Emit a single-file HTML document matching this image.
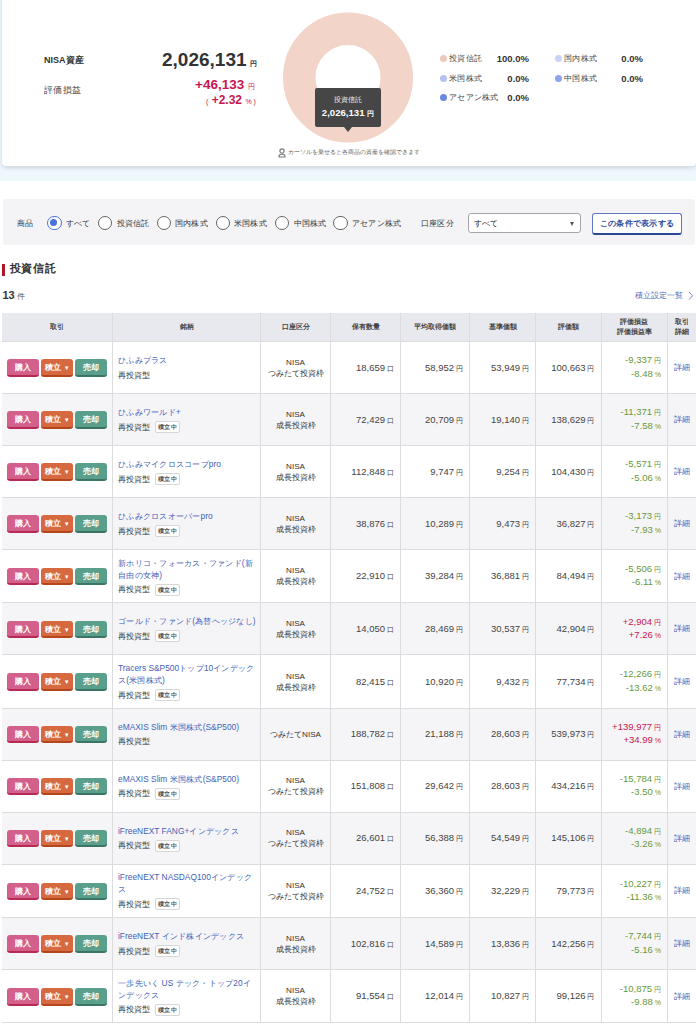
<!DOCTYPE html>
<html><head><meta charset="utf-8">
<style>
*{box-sizing:border-box;margin:0;padding:0}
html,body{width:696px;height:1024px;overflow:hidden;background:#fff;font-family:"Liberation Sans",sans-serif;color:#333}
.abs{position:absolute;white-space:nowrap}
#band{position:absolute;left:0;top:0;width:696px;height:180.5px;background:#eff8fd}
#card{position:absolute;left:2px;top:-10px;width:694px;height:176px;background:#fff;border-radius:4px;box-shadow:0 1.5px 4px rgba(70,80,90,.2)}
.lbl{font-size:9.5px}
.yen{font-size:7px}
.leg{font-size:8.3px;color:#444;letter-spacing:.25px}
.legv{font-size:9.5px;font-weight:bold;color:#333}
.dot{position:absolute;width:7px;height:7px;border-radius:50%}
#filter{position:absolute;left:3px;top:199px;width:692px;height:46.3px;background:#f4f4f7;border-radius:3px}
.fl{font-size:8.3px;color:#333;letter-spacing:.2px}
.radio{position:absolute;width:14.4px;height:14.4px;border-radius:50%;border:1.6px solid #666;background:#fff}
.radio.on{border-color:#4a72dc}
.radio.on:after{content:"";position:absolute;left:2.1px;top:2.1px;width:7px;height:7px;border-radius:50%;background:#4a72dc}
table{position:absolute;left:2px;top:313px;width:694px;border-collapse:separate;border-spacing:0;table-layout:fixed}
td,th{border-right:1px solid #dcdcdf;border-bottom:1px solid #dcdcdf;font-size:9.5px;overflow:hidden;white-space:nowrap;padding:0}
th{background:#e8e9ee;height:29px;font-size:7px;font-weight:bold;color:#444;text-align:center;line-height:9.7px}
td{vertical-align:middle}
tr.s td{background:#f5f5f8}
td.num{text-align:right;padding-right:6.5px;color:#444}
td.num small{font-size:7px;margin-left:1.5px}
.btn{display:inline-block;width:32px;height:17.6px;border-radius:3px;color:#fff;font-size:8.4px;font-weight:bold;text-align:center;line-height:17.2px;vertical-align:top;margin-right:2.2px;position:relative;top:0.5px}
.b1{background:#d3608a;border-bottom:2px solid #b82a55}
.b2{background:#d6693f;border-bottom:2px solid #b4461c}
.b3{background:#5a9f8b;border-bottom:2px solid #3b7565;margin-right:0}
td.bt{padding-left:5px}
td.nm{padding-left:5px;padding-top:0.5px;font-size:8.2px;line-height:12px}
td.nm a{color:#3f62b8;text-decoration:none;display:block;font-size:8.4px;letter-spacing:.25px;line-height:12px;margin-bottom:3.5px}
td.nm a .l{letter-spacing:0}
td.nm .t{display:inline-block;border:1px solid #d6d6d6;border-radius:2px;font-size:6.3px;font-weight:bold;color:#555;letter-spacing:.5px;width:25px;text-align:center;height:12px;line-height:10px;margin-left:5px;background:#fff;vertical-align:top;position:relative;top:-0.5px}
td.ac{text-align:center;font-size:8.1px;line-height:11px}
td.pl{text-align:right;padding-right:6px;line-height:12.3px;font-size:9.5px}
td.pl small{font-size:7px;margin-left:2px}
.g{color:#66983a}
.r{color:#c8174f}
td.dt{text-align:center;color:#3f5fb8;font-size:8.3px;border-right:none}
th:last-child{border-right:none}
</style></head><body>
<div id="band"></div>
<div id="card"></div>

<div class="abs lbl" style="left:44px;top:53.5px;font-weight:bold;font-size:9px">NISA資産</div>
<div class="abs" style="left:162px;top:48.6px;font-size:19px;font-weight:bold;color:#333">2,026,131<span class="yen" style="margin-left:3px">円</span></div>
<div class="abs lbl" style="left:44px;top:84px;color:#444;font-size:9px;letter-spacing:.45px">評価損益</div>
<div class="abs" style="left:195px;top:76.6px;font-size:13.5px;font-weight:bold;color:#c8174f">+46,133<span class="yen" style="margin-left:4px;font-weight:normal">円</span></div>
<div class="abs" style="left:206px;top:93px;font-size:12px;font-weight:bold;color:#c8174f"><span class="yen" style="font-weight:normal">(</span> +2.32 <span class="yen" style="font-weight:normal">% )</span></div>

<svg class="abs" style="left:282px;top:12px" width="132" height="132" viewBox="0 0 132 132">
<circle cx="66" cy="65.5" r="48.75" fill="none" stroke="#f2d4c8" stroke-width="32.5"/>
</svg>
<div class="abs" style="left:315px;top:88px;width:66px;height:39px;background:#464646;border-radius:2px"></div>
<div class="abs" style="left:343.5px;top:126.5px;width:0;height:0;border-left:4.5px solid transparent;border-right:4.5px solid transparent;border-top:5px solid #464646"></div>
<div class="abs" style="left:315px;top:95px;width:66px;text-align:center;color:#eee;font-size:7px">投資信託</div>
<div class="abs" style="left:315px;top:107px;width:66px;text-align:center;color:#fff;font-size:9.6px;font-weight:bold">2,026,131 <span style="font-size:7px">円</span></div>
<div class="abs" style="left:278px;top:146.5px;font-size:6.3px;color:#666">
<svg width="8" height="10" viewBox="0 0 8 10" style="vertical-align:-3px;position:relative;top:1px"><circle cx="4" cy="2.9" r="2.1" fill="none" stroke="#7a7a7a" stroke-width="1.2"/><path d="M1 9 Q0.8 6.2 4 6.2 Q7.2 6.2 7 9 Z" fill="none" stroke="#7a7a7a" stroke-width="1.2" stroke-linejoin="round"/></svg> カーソルを乗せると各商品の資産を確認できます</div>

<div class="dot" style="left:440px;top:55.0px;background:#ebcabe"></div>
<div class="abs leg" style="left:449px;top:53.0px">投資信託</div>
<div class="abs legv" style="left:480px;top:52.5px;width:49px;text-align:right">100.0%</div>
<div class="dot" style="left:555px;top:55.0px;background:#cbd4f6"></div>
<div class="abs leg" style="left:564px;top:53.0px">国内株式</div>
<div class="abs legv" style="left:600px;top:52.5px;width:43px;text-align:right">0.0%</div>
<div class="dot" style="left:440px;top:74.5px;background:#b4c1f3"></div>
<div class="abs leg" style="left:449px;top:72.5px">米国株式</div>
<div class="abs legv" style="left:480px;top:72.5px;width:49px;text-align:right">0.0%</div>
<div class="dot" style="left:555px;top:74.5px;background:#8fa2eb"></div>
<div class="abs leg" style="left:564px;top:72.5px">中国株式</div>
<div class="abs legv" style="left:600px;top:72.5px;width:43px;text-align:right">0.0%</div>
<div class="dot" style="left:440px;top:94px;background:#6c85e0"></div>
<div class="abs leg" style="left:449px;top:91.8px">アセアン株式</div>
<div class="abs legv" style="left:480px;top:91.8px;width:49px;text-align:right">0.0%</div>

<div id="filter"></div>
<div class="abs fl" style="left:17px;top:217.5px">商品</div>
<div class="radio on" style="left:47.2px;top:215.5px"></div>
<div class="abs fl" style="left:66px;top:217.5px">すべて</div>
<div class="radio" style="left:97.7px;top:215.5px"></div>
<div class="abs fl" style="left:116.5px;top:217.5px">投資信託</div>
<div class="radio" style="left:156.7px;top:215.5px"></div>
<div class="abs fl" style="left:175px;top:217.5px">国内株式</div>
<div class="radio" style="left:215.7px;top:215.5px"></div>
<div class="abs fl" style="left:234px;top:217.5px">米国株式</div>
<div class="radio" style="left:274.7px;top:215.5px"></div>
<div class="abs fl" style="left:293.5px;top:217.5px">中国株式</div>
<div class="radio" style="left:333.2px;top:215.5px"></div>
<div class="abs fl" style="left:352px;top:217.5px">アセアン株式</div>
<div class="abs fl" style="left:421px;top:217.5px">口座区分</div>
<div class="abs" style="left:468px;top:213px;width:113px;height:19.5px;border:1px solid #a5a5a5;border-radius:3px;background:#fff"></div>
<div class="abs fl" style="left:474px;top:217.5px;color:#222">すべて</div>
<div class="abs" style="left:569.5px;top:221.5px;width:0;height:0;border-left:2.6px solid transparent;border-right:2.6px solid transparent;border-top:4.5px solid #555"></div>
<div class="abs" style="left:592px;top:213px;width:90px;height:21.5px;border:1px solid #5f76c2;border-bottom:2.5px solid #2b4896;border-radius:3px;background:#fff;color:#2f4c9c;font-size:8.3px;letter-spacing:.25px;font-weight:bold;text-align:center;line-height:18px">この条件で表示する</div>

<div class="abs" style="left:2px;top:263.5px;width:2.5px;height:12px;background:#b0182a"></div>
<div class="abs" style="left:9.5px;top:261.2px;font-size:11.4px;letter-spacing:.8px;font-weight:bold;color:#333">投資信託</div>
<div class="abs" style="left:2.5px;top:289px;font-size:11px;font-weight:bold;color:#333">13<span style="font-size:8px;font-weight:normal;color:#555;margin-left:1.8px">件</span></div>
<div class="abs" style="left:634.5px;top:290px;font-size:8.2px;color:#4a6ab8">積立設定一覧<svg width="6" height="9" viewBox="0 0 6 9" style="vertical-align:-1.5px;margin-left:5.5px"><path d="M1 1 L4.6 4.8 L1 8.6" fill="none" stroke="#5a76c0" stroke-width="0.9"/></svg></div>

<table>
<colgroup><col style="width:111px"><col style="width:148px"><col style="width:70px"><col style="width:70px"><col style="width:69px"><col style="width:66px"><col style="width:65.5px"><col style="width:66.5px"><col style="width:28px"></colgroup>
<tr><th>取引</th><th>銘柄</th><th>口座区分</th><th>保有数量</th><th>平均取得価額</th><th>基準価額</th><th>評価額</th><th>評価損益<br>評価損益率</th><th>取引<br>詳細</th></tr>
<tr style="height:52px"><td class="bt"><span class="btn b1">購入</span><span class="btn b2">積立<span style="font-size:6px;margin-left:3px">▼</span></span><span class="btn b3">売却</span></td><td class="nm"><a>ひふみプラス</a>再投資型</td><td class="ac">NISA<br>つみたて投資枠</td><td class="num">18,659<small>口</small></td><td class="num">58,952<small>円</small></td><td class="num">53,949<small>円</small></td><td class="num">100,663<small>円</small></td><td class="pl g">-9,337<small>円</small><br>-8.48<small>%</small></td><td class="dt">詳細</td></tr>
<tr class="s" style="height:52px"><td class="bt"><span class="btn b1">購入</span><span class="btn b2">積立<span style="font-size:6px;margin-left:3px">▼</span></span><span class="btn b3">売却</span></td><td class="nm"><a>ひふみワールド<span class="l">+</span></a>再投資型<span class="t">積立中</span></td><td class="ac">NISA<br>成長投資枠</td><td class="num">72,429<small>口</small></td><td class="num">20,709<small>円</small></td><td class="num">19,140<small>円</small></td><td class="num">138,629<small>円</small></td><td class="pl g">-11,371<small>円</small><br>-7.58<small>%</small></td><td class="dt">詳細</td></tr>
<tr style="height:52px"><td class="bt"><span class="btn b1">購入</span><span class="btn b2">積立<span style="font-size:6px;margin-left:3px">▼</span></span><span class="btn b3">売却</span></td><td class="nm"><a>ひふみマイクロスコープ<span class="l">pro</span></a>再投資型<span class="t">積立中</span></td><td class="ac">NISA<br>成長投資枠</td><td class="num">112,848<small>口</small></td><td class="num">9,747<small>円</small></td><td class="num">9,254<small>円</small></td><td class="num">104,430<small>円</small></td><td class="pl g">-5,571<small>円</small><br>-5.06<small>%</small></td><td class="dt">詳細</td></tr>
<tr class="s" style="height:52px"><td class="bt"><span class="btn b1">購入</span><span class="btn b2">積立<span style="font-size:6px;margin-left:3px">▼</span></span><span class="btn b3">売却</span></td><td class="nm"><a>ひふみクロスオーバー<span class="l">pro</span></a>再投資型<span class="t">積立中</span></td><td class="ac">NISA<br>成長投資枠</td><td class="num">38,876<small>口</small></td><td class="num">10,289<small>円</small></td><td class="num">9,473<small>円</small></td><td class="num">36,827<small>円</small></td><td class="pl g">-3,173<small>円</small><br>-7.93<small>%</small></td><td class="dt">詳細</td></tr>
<tr style="height:53.35px"><td class="bt"><span class="btn b1">購入</span><span class="btn b2">積立<span style="font-size:6px;margin-left:3px">▼</span></span><span class="btn b3">売却</span></td><td class="nm"><a>新ホリコ・フォーカス・ファンド<span class="l">(</span>新<br>自由の女神<span class="l">)</span></a>再投資型<span class="t">積立中</span></td><td class="ac">NISA<br>成長投資枠</td><td class="num">22,910<small>口</small></td><td class="num">39,284<small>円</small></td><td class="num">36,881<small>円</small></td><td class="num">84,494<small>円</small></td><td class="pl g">-5,506<small>円</small><br>-6.11<small>%</small></td><td class="dt">詳細</td></tr>
<tr class="s" style="height:52px"><td class="bt"><span class="btn b1">購入</span><span class="btn b2">積立<span style="font-size:6px;margin-left:3px">▼</span></span><span class="btn b3">売却</span></td><td class="nm"><a>ゴールド・ファンド<span class="l">(</span>為替ヘッジなし<span class="l">)</span></a>再投資型<span class="t">積立中</span></td><td class="ac">NISA<br>成長投資枠</td><td class="num">14,050<small>口</small></td><td class="num">28,469<small>円</small></td><td class="num">30,537<small>円</small></td><td class="num">42,904<small>円</small></td><td class="pl r">+2,904<small>円</small><br>+7.26<small>%</small></td><td class="dt">詳細</td></tr>
<tr style="height:53.35px"><td class="bt"><span class="btn b1">購入</span><span class="btn b2">積立<span style="font-size:6px;margin-left:3px">▼</span></span><span class="btn b3">売却</span></td><td class="nm"><a><span class="l">Tracers S&amp;P500</span>トップ<span class="l">10</span>インデック<br>ス<span class="l">(</span>米国株式<span class="l">)</span></a>再投資型<span class="t">積立中</span></td><td class="ac">NISA<br>成長投資枠</td><td class="num">82,415<small>口</small></td><td class="num">10,920<small>円</small></td><td class="num">9,432<small>円</small></td><td class="num">77,734<small>円</small></td><td class="pl g">-12,266<small>円</small><br>-13.62<small>%</small></td><td class="dt">詳細</td></tr>
<tr class="s" style="height:52px"><td class="bt"><span class="btn b1">購入</span><span class="btn b2">積立<span style="font-size:6px;margin-left:3px">▼</span></span><span class="btn b3">売却</span></td><td class="nm"><a><span class="l">eMAXIS Slim </span>米国株式<span class="l">(S&amp;P500)</span></a>再投資型</td><td class="ac">つみたてNISA</td><td class="num">188,782<small>口</small></td><td class="num">21,188<small>円</small></td><td class="num">28,603<small>円</small></td><td class="num">539,973<small>円</small></td><td class="pl r">+139,977<small>円</small><br>+34.99<small>%</small></td><td class="dt">詳細</td></tr>
<tr style="height:52px"><td class="bt"><span class="btn b1">購入</span><span class="btn b2">積立<span style="font-size:6px;margin-left:3px">▼</span></span><span class="btn b3">売却</span></td><td class="nm"><a><span class="l">eMAXIS Slim </span>米国株式<span class="l">(S&amp;P500)</span></a>再投資型<span class="t">積立中</span></td><td class="ac">NISA<br>つみたて投資枠</td><td class="num">151,808<small>口</small></td><td class="num">29,642<small>円</small></td><td class="num">28,603<small>円</small></td><td class="num">434,216<small>円</small></td><td class="pl g">-15,784<small>円</small><br>-3.50<small>%</small></td><td class="dt">詳細</td></tr>
<tr class="s" style="height:52px"><td class="bt"><span class="btn b1">購入</span><span class="btn b2">積立<span style="font-size:6px;margin-left:3px">▼</span></span><span class="btn b3">売却</span></td><td class="nm"><a><span class="l">iFreeNEXT FANG+</span>インデックス</a>再投資型<span class="t">積立中</span></td><td class="ac">NISA<br>つみたて投資枠</td><td class="num">26,601<small>口</small></td><td class="num">56,388<small>円</small></td><td class="num">54,549<small>円</small></td><td class="num">145,106<small>円</small></td><td class="pl g">-4,894<small>円</small><br>-3.26<small>%</small></td><td class="dt">詳細</td></tr>
<tr style="height:53.35px"><td class="bt"><span class="btn b1">購入</span><span class="btn b2">積立<span style="font-size:6px;margin-left:3px">▼</span></span><span class="btn b3">売却</span></td><td class="nm"><a><span class="l">iFreeNEXT NASDAQ100</span>インデック<br>ス</a>再投資型<span class="t">積立中</span></td><td class="ac">NISA<br>つみたて投資枠</td><td class="num">24,752<small>口</small></td><td class="num">36,360<small>円</small></td><td class="num">32,229<small>円</small></td><td class="num">79,773<small>円</small></td><td class="pl g">-10,227<small>円</small><br>-11.36<small>%</small></td><td class="dt">詳細</td></tr>
<tr class="s" style="height:52px"><td class="bt"><span class="btn b1">購入</span><span class="btn b2">積立<span style="font-size:6px;margin-left:3px">▼</span></span><span class="btn b3">売却</span></td><td class="nm"><a><span class="l">iFreeNEXT </span>インド株インデックス</a>再投資型<span class="t">積立中</span></td><td class="ac">NISA<br>成長投資枠</td><td class="num">102,816<small>口</small></td><td class="num">14,589<small>円</small></td><td class="num">13,836<small>円</small></td><td class="num">142,256<small>円</small></td><td class="pl g">-7,744<small>円</small><br>-5.16<small>%</small></td><td class="dt">詳細</td></tr>
<tr style="height:53.35px"><td class="bt"><span class="btn b1">購入</span><span class="btn b2">積立<span style="font-size:6px;margin-left:3px">▼</span></span><span class="btn b3">売却</span></td><td class="nm"><a>一歩先いく<span class="l"> US </span>テック・トップ<span class="l">20</span>イ<br>ンデックス</a>再投資型<span class="t">積立中</span></td><td class="ac">NISA<br>成長投資枠</td><td class="num">91,554<small>口</small></td><td class="num">12,014<small>円</small></td><td class="num">10,827<small>円</small></td><td class="num">99,126<small>円</small></td><td class="pl g">-10,875<small>円</small><br>-9.88<small>%</small></td><td class="dt">詳細</td></tr>
</table>
</body></html>
